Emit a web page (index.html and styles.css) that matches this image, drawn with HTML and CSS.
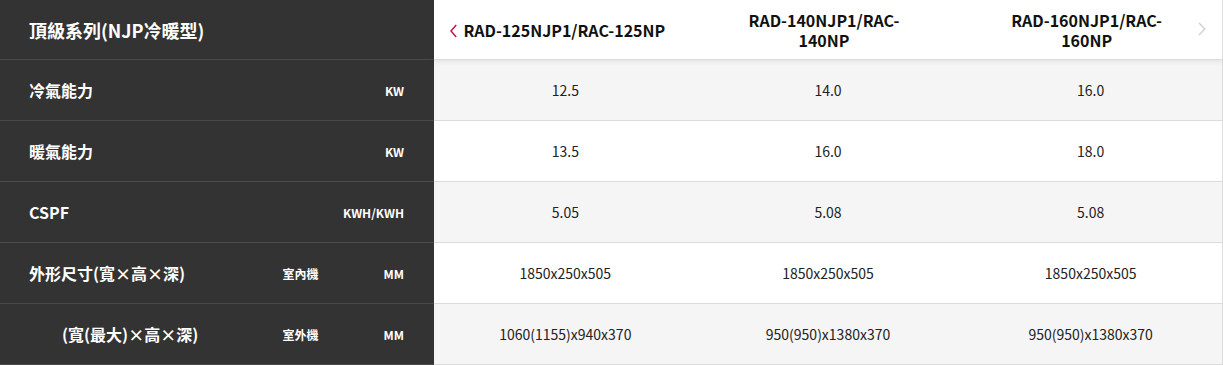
FILE: index.html
```html
<!DOCTYPE html>
<html lang="zh-Hant">
<head>
<meta charset="utf-8">
<title>頂級系列(NJP冷暖型)</title>
<link rel="stylesheet" href="styles.css">
</head>
<body>
<div class="spec">
  <div class="row head">
    <div class="side"><span class="title">頂級系列(NJP冷暖型)</span></div>
    <div class="models">
      <div class="model"><span class="name">RAD-125NJP1/RAC-125NP</span></div>
      <div class="model"><span class="name wrap">RAD-140NJP1/RAC-140NP</span></div>
      <div class="model"><span class="name wrap">RAD-160NJP1/RAC-160NP</span></div>
      <button class="nav prev" aria-label="prev"><svg width="7" height="14" viewBox="0 0 7 14"><polyline points="6.2,1 1,7 6.2,13" fill="none" stroke="#c8163f" stroke-width="1.5"/></svg></button>
      <button class="nav next" aria-label="next"><svg width="8" height="14" viewBox="0 0 8 14"><polyline points="1,1 6.8,7 1,13" fill="none" stroke="#cfcfcf" stroke-width="1.3"/></svg></button>
    </div>
  </div>
  <div class="row shade">
    <div class="side"><span class="label">冷氣能力</span><span class="unit">KW</span></div>
    <div class="cells"><div class="val">12.5</div><div class="val">14.0</div><div class="val">16.0</div></div>
  </div>
  <div class="row">
    <div class="side"><span class="label">暖氣能力</span><span class="unit">KW</span></div>
    <div class="cells"><div class="val">13.5</div><div class="val">16.0</div><div class="val">18.0</div></div>
  </div>
  <div class="row shade">
    <div class="side"><span class="label">CSPF</span><span class="unit">KWH/KWH</span></div>
    <div class="cells"><div class="val">5.05</div><div class="val">5.08</div><div class="val">5.08</div></div>
  </div>
  <div class="row">
    <div class="side"><span class="label">外形尺寸(寬×高×深)</span><span class="sub">室內機</span><span class="unit">MM</span></div>
    <div class="cells"><div class="val">1850x250x505</div><div class="val">1850x250x505</div><div class="val">1850x250x505</div></div>
  </div>
  <div class="row shade">
    <div class="side"><span class="label indent">(寬(最大)×高×深)</span><span class="sub">室外機</span><span class="unit">MM</span></div>
    <div class="cells"><div class="val">1060(1155)x940x370</div><div class="val">950(950)x1380x370</div><div class="val">950(950)x1380x370</div></div>
  </div>
</div>
</body>
</html>
```

FILE: styles.css
```css
* { box-sizing: border-box; }
html, body { margin: 0; padding: 0; background: #fff; }
body {
  font-family: "Noto Sans CJK TC", "Noto Sans", sans-serif;
  color: #222;
}
.spec { width: 1223px; }
.row {
  display: grid;
  grid-template-columns: 434px 1fr;
  height: 61px;
}
.row.head { height: 60px; position: relative; z-index: 1; }
.side {
  background: #333;
  color: #fff;
  font-weight: 700;
  display: flex;
  align-items: center;
  padding: 0 30px 0 29px;
  border-bottom: 1px solid #4b4b4b;
}
.title { font-size: 18px; }
.label { flex: 1; font-size: 16px; }
.label.indent { padding-left: 33px; }
.sub { font-size: 12px; margin-right: 65px; }
.unit { font-size: 12px; }
.models, .cells {
  display: grid;
  grid-template-columns: repeat(3, 1fr);
  border-bottom: 1px solid #dcdcdc;
  border-right: 1px solid #dcdcdc;
}
.models {
  position: relative;
  background: #fff;
  box-shadow: 0 2px 4px rgba(0, 0, 0, 0.07);
}
.model {
  display: flex;
  align-items: center;
  justify-content: center;
  padding-right: 8px;
  text-align: center;
}
.model:first-child { padding-left: 4px; padding-right: 6px; }
.name {
  font-size: 16px;
  font-weight: 700;
  line-height: 20px;
  color: #111;
}
.name.wrap { display: inline-block; max-width: 180px; }
.nav {
  position: absolute;
  width: 8px;
  height: 14px;
  padding: 0;
  border: 0;
  background: none;
  display: flex;
}
.nav.prev { left: 16px; top: 24px; width: 7px; }
.nav.next { right: 16px; top: 22px; }
.cells { background: #fff; }
.row.shade .cells { background: #f5f5f5; }
.val {
  display: flex;
  align-items: center;
  justify-content: center;
  font-size: 14px;
  color: #222;
}
```
